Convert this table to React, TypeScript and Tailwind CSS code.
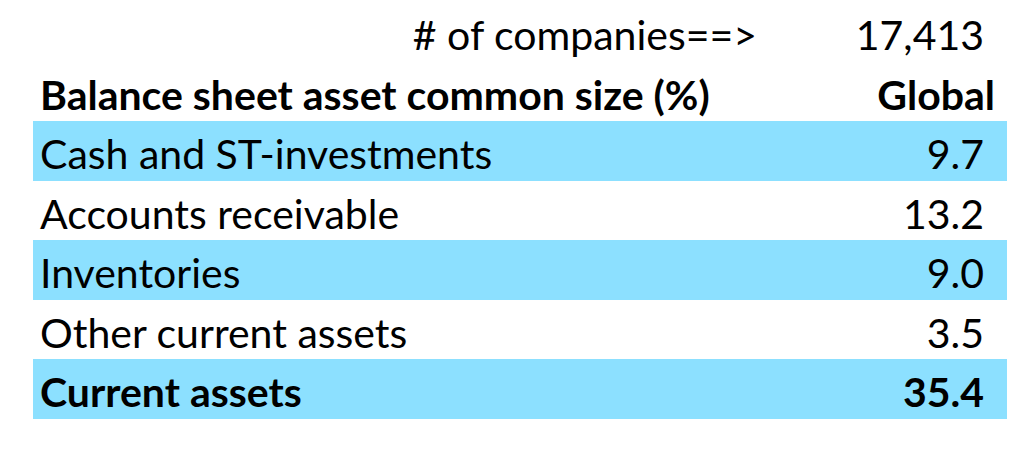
const rows = [
  { label: "Cash and ST-investments", value: "9.7", shaded: true },
  { label: "Accounts receivable", value: "13.2", shaded: false },
  { label: "Inventories", value: "9.0", shaded: true },
  { label: "Other current assets", value: "3.5", shaded: false },
  { label: "Current assets", value: "35.4", shaded: true, bold: true },
];

export default function App() {
  return (
    <div
      className="h-[453px] w-[1024px] bg-white pl-[33px] pt-[2px] text-[41px] leading-[60px] text-black"
      style={{ fontFamily: "Lato, 'Open Sans', sans-serif" }}
    >
      <div className="w-[974px]">
        <div className="grid h-[59.5px] grid-cols-[737px_1fr] items-center pt-[3px]">
          <div className="pr-[13px] text-right">
            # of companies==&gt;
          </div>
          <div className="pr-[23px] text-right">17,413</div>
        </div>
        <div className="grid h-[59.5px] grid-cols-[737px_1fr] items-center pt-[3px] font-bold">
          <div className="pl-[7px]">Balance sheet asset common size (%)</div>
          <div className="pr-[12px] text-right">Global</div>
        </div>
        {rows.map((r) => (
          <div
            key={r.label}
            className={`grid h-[59.5px] grid-cols-[737px_1fr] items-center pt-[3px] ${
              r.shaded ? "bg-[#8ce0ff]" : ""
            } ${r.bold ? "font-bold" : ""}`}
          >
            <div className="pl-[7px]">{r.label}</div>
            <div className="pr-[23px] text-right">{r.value}</div>
          </div>
        ))}
      </div>
    </div>
  );
}
